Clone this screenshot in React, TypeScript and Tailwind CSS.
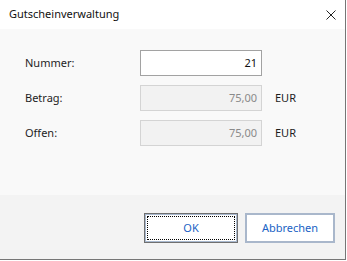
import React from 'react';

const font = { fontFamily: '"Segoe UI", "Noto Sans", "Open Sans", sans-serif' };

function Field({ label, value, disabled, unit }: { label: string; value: string; disabled?: boolean; unit?: string }) {
  return (
    <div className="flex h-[26px] items-center">
      <span className="w-[115px] pl-[25px] box-content text-[11px] text-[#1e1e1e]">{label}</span>
      <div
        className={
          disabled
            ? 'flex h-[26px] w-[122px] items-center justify-end border border-[#d4d4d4] bg-[#f2f2f2] pr-[4px] text-[11px] text-[#8a8a8a]'
            : 'flex h-[26px] w-[122px] items-center justify-end border border-[#a2a2a2] bg-white pr-[4px] text-[11px] text-[#111]'
        }
      >
        {value}
      </div>
      {unit && <span className="ml-[13px] text-[11px] text-[#1e1e1e]">{unit}</span>}
    </div>
  );
}

export default function App() {
  return (
    <div className="h-[261px] w-[347px] bg-white" style={font}>
      <div className="flex h-[260px] w-[346px] flex-col border-r border-b border-[#767676] bg-white">
        {/* title bar */}
        <div className="flex h-[29px] shrink-0 items-center justify-between bg-white pl-[9px] pr-[9px]">
          <span className="text-[11px] text-[#111]">Gutscheinverwaltung</span>
          <svg width="10" height="10" viewBox="0 0 10 10">
            <path d="M0.5 0.5 L9.5 9.5 M9.5 0.5 L0.5 9.5" stroke="#222" strokeWidth="1" />
          </svg>
        </div>

        {/* body */}
        <div className="flex h-[166px] shrink-0 flex-col gap-[9px] bg-[#f9f9f9] pt-[21px]">
          <Field label="Nummer:" value="21" />
          <Field label="Betrag:" value="75,00" disabled unit="EUR" />
          <Field label="Offen:" value="75,00" disabled unit="EUR" />
        </div>

        {/* footer */}
        <div className="flex flex-1 justify-end gap-[7px] bg-[#f3f3f3] pr-[10px] pt-[18px]">
          <button className="h-[30px] w-[94px] border border-[#6f6f6f] bg-[#a9b9cf] p-px">
            <div className="flex h-full w-full items-center justify-center bg-white p-px">
              <div className="flex h-full w-full items-center justify-center border border-dotted border-black text-[11px] text-[#2062c4]">
                OK
              </div>
            </div>
          </button>
          <button className="flex h-[30px] w-[90px] items-center justify-center border-2 border-[#a9b7cb] bg-white text-[11px] text-[#2062c4]">
            Abbrechen
          </button>
        </div>
      </div>
    </div>
  );
}
